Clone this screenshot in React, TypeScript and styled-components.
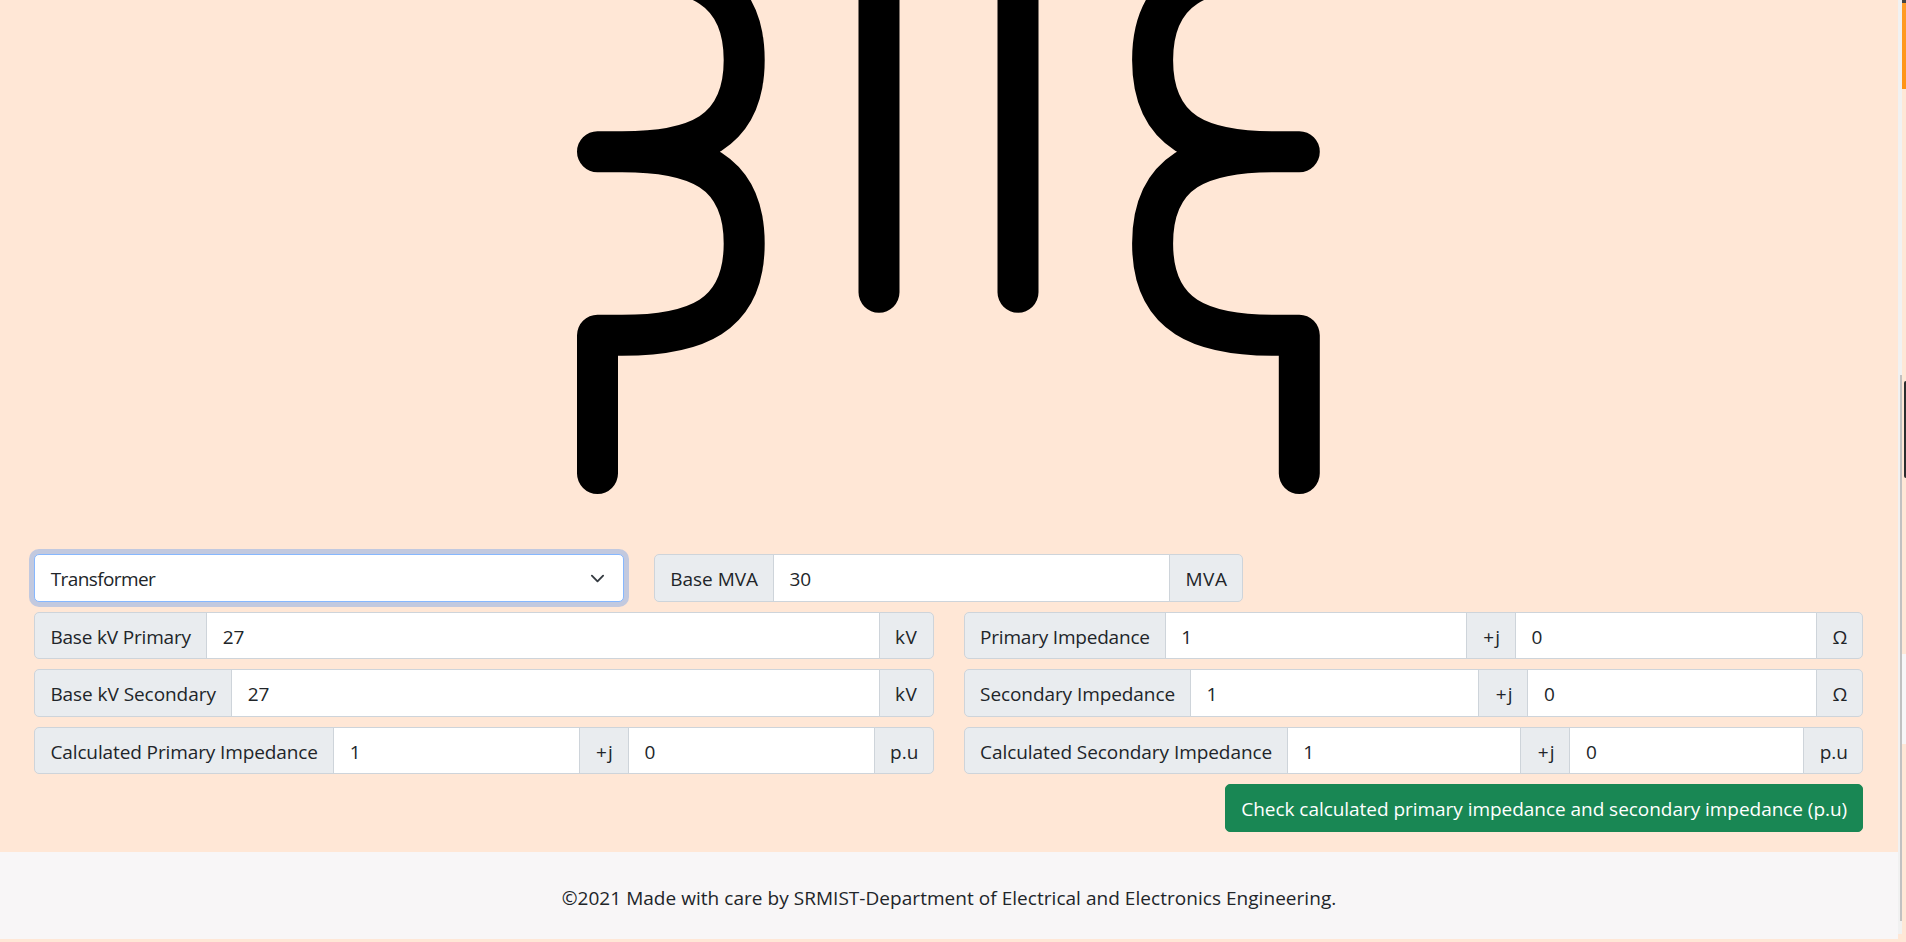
import React from "react";
import styled, { createGlobalStyle, css } from "styled-components";

const GlobalStyle = createGlobalStyle`
  *, *::before, *::after { box-sizing: border-box; }
  html, body { margin: 0; height: 100%; overflow: hidden; }
  body {
    background: #ffe7d6;
    color: #212529;
    font-family: "Open Sans", "Noto Sans", sans-serif;
    font-size: 19px;
    line-height: 30px;
  }
`;

const Shell = styled.div`
  display: flex;
  height: 942px;
  overflow: hidden;
`;

const Page = styled.div`
  flex: 0 0 1898px;
  display: flex;
  flex-direction: column;
`;

const Figure = styled.div`
  height: 554.25px;
  overflow: hidden;
`;

const Symbol = styled.svg`
  display: block;
  width: 1898px;
  height: 554px;
  fill: none;
  stroke: #000;
  stroke-width: 41px;
  stroke-linecap: round;
  stroke-linejoin: round;
`;

const Form = styled.form`
  height: 297.75px;
  padding: 0 34.8px 0 33.9px;
  display: flex;
  flex-direction: column;
  gap: 10px;
`;

const Row = styled.div<{ $columns: number }>`
  display: grid;
  grid-template-columns: repeat(${(p) => p.$columns}, minmax(0, 1fr));
  gap: 30px;
`;

const InputGroup = styled.div`
  display: flex;
  height: 47.5px;

  > * + * {
    margin-left: -1px;
  }
  > :first-child {
    border-radius: 5px 0 0 5px;
  }
  > :last-child {
    border-radius: 0 5px 5px 0;
  }
`;

const Addon = styled.span<{ $width: number; $spacing?: number }>`
  flex: 0 0 ${(p) => p.$width}px;
  display: flex;
  align-items: center;
  padding: 2px 0 0 15.5px;
  border: 1px solid #ced4da;
  background: #e9ecef;
  white-space: nowrap;
  letter-spacing: ${(p) => p.$spacing ?? 0}px;
`;

const Joiner = styled(Addon)`
  padding-left: 16.3px;
`;

const field = css`
  border: 1px solid #ced4da;
  background: #fff;
  color: #212529;
  font: inherit;
  outline: none;
`;

const Input = styled.input`
  ${field}
  flex: 1 1 0;
  min-width: 0;
  padding: 2px 15px 0 15.6px;
  border-radius: 0;
`;

const Select = styled.div`
  ${field}
  display: flex;
  align-items: center;
  justify-content: space-between;
  height: 47.5px;
  padding: 1px 18px 0 15.8px;
  border-color: #86b7fe;
  border-radius: 5px;
  box-shadow: 0 0 0 5px rgba(13, 110, 253, 0.25);
  letter-spacing: -0.6px;
`;

const Chevron = styled.svg`
  width: 15px;
  height: 15px;
  fill: none;
  stroke: #343a40;
  stroke-width: 2;
  stroke-linecap: round;
  stroke-linejoin: round;
`;

const CheckButton = styled.button`
  align-self: flex-end;
  width: 638px;
  height: 47.5px;
  padding: 1px 0 0;
  border: 1px solid #198754;
  border-radius: 5px;
  background: #198754;
  color: #fff;
  font: inherit;
  letter-spacing: -0.04px;
  white-space: nowrap;
`;

const Footer = styled.footer`
  height: 87px;
  padding-top: 31px;
  background: #f8f6f7;
  text-align: center;
  letter-spacing: 0.04px;
`;

const ScrollTrack = styled.div`
  flex: 0 0 4px;
  height: 934px;
  padding: 375px 0 13px 2px;
  background: #f1f1f1;
`;

const ScrollThumb = styled.div`
  height: 546px;
  background: #c1c1c1;
`;

const EdgeStrip = styled.div`
  flex: 0 0 4px;
  display: flex;
  flex-direction: column;
  overflow: hidden;
`;

const StripPart = styled.div<{ $height: number; $fill?: string; $inset?: boolean }>`
  flex: 0 0 ${(p) => p.$height}px;
  background: ${(p) => p.$fill ?? "transparent"};
  ${(p) =>
    p.$inset &&
    css`
      margin-left: 2px;
      border-radius: 2px 0 0 2px;
    `}
`;

interface ImpedanceProps {
  label: string;
  width: number;
  spacing: number;
  unit: string;
  unitWidth: number;
}

const Impedance = ({ label, width, spacing, unit, unitWidth }: ImpedanceProps) => (
  <InputGroup>
    <Addon $width={width} $spacing={spacing}>{label}</Addon>
    <Input defaultValue="1" />
    <Joiner $width={50} $spacing={1.1}>+j</Joiner>
    <Input defaultValue="0" />
    <Addon $width={unitWidth}>{unit}</Addon>
  </InputGroup>
);

interface BaseProps {
  label: string;
  width: number;
  spacing: number;
  value: string;
  unit: string;
  unitWidth: number;
  unitSpacing: number;
}

const BaseValue = ({ label, width, spacing, value, unit, unitWidth, unitSpacing }: BaseProps) => (
  <InputGroup>
    <Addon $width={width} $spacing={spacing}>{label}</Addon>
    <Input defaultValue={value} />
    <Addon $width={unitWidth} $spacing={unitSpacing}>{unit}</Addon>
  </InputGroup>
);

const winding =
  "M597.5 -32 H622 C695 -32 744.2 -13.5 744.2 60 C744.2 133.5 695 151.7 622 151.7 H597.5 H622 C695 151.7 744.2 170 744.2 243.5 C744.2 317 695 335.3 622 335.3 H597.5 V473.5";

export default function App() {
  return (
    <>
      <GlobalStyle />
      <Shell>
        <Page>
          <Figure>
            <Symbol viewBox="0 0 1898 554">
              <path d={winding} />
              <path d={winding} transform="translate(1896.8 0) scale(-1 1)" />
              <path d="M879 -40 V292.2 M1018 -40 V292.2" />
            </Symbol>
          </Figure>
          <Form>
            <Row $columns={3}>
              <Select>
                Transformer
                <Chevron viewBox="0 0 16 16">
                  <path d="M2 5l6 6 6-6" />
                </Chevron>
              </Select>
              <BaseValue label="Base MVA" width={120.2} spacing={0} value="30" unit="MVA" unitWidth={74.4} unitSpacing={0.5} />
            </Row>
            <Row $columns={2}>
              <BaseValue label="Base kV Primary" width={173.2} spacing={-0.18} value="27" unit="kV" unitWidth={55} unitSpacing={0.5} />
              <Impedance label="Primary Impedance" width={202.2} spacing={-0.2} unit="Ω" unitWidth={47.2} />
            </Row>
            <Row $columns={2}>
              <BaseValue label="Base kV Secondary" width={198.2} spacing={-0.06} value="27" unit="kV" unitWidth={55} unitSpacing={0.5} />
              <Impedance label="Secondary Impedance" width={227.3} spacing={-0.08} unit="Ω" unitWidth={47.2} />
            </Row>
            <Row $columns={2}>
              <Impedance label="Calculated Primary Impedance" width={300.2} spacing={-0.11} unit="p.u" unitWidth={60} />
              <Impedance label="Calculated Secondary Impedance" width={324.2} spacing={-0.06} unit="p.u" unitWidth={60} />
            </Row>
            <CheckButton type="button">
              Check calculated primary impedance and secondary impedance (p.u)
            </CheckButton>
          </Form>
          <Footer>
            ©2021 Made with care by SRMIST-Department of Electrical and Electronics Engineering.
          </Footer>
        </Page>
        <ScrollTrack>
          <ScrollThumb />
        </ScrollTrack>
        <EdgeStrip>
          <StripPart $height={3} $fill="#444" />
          <StripPart $height={86} $fill="linear-gradient(#ff9c27, #ff9416)" />
          <StripPart $height={292} />
          <StripPart $height={97} $fill="#2b2d2f" $inset />
          <StripPart $height={176} />
          <StripPart $height={90} $fill="#f8f6f7" />
        </EdgeStrip>
      </Shell>
    </>
  );
}
